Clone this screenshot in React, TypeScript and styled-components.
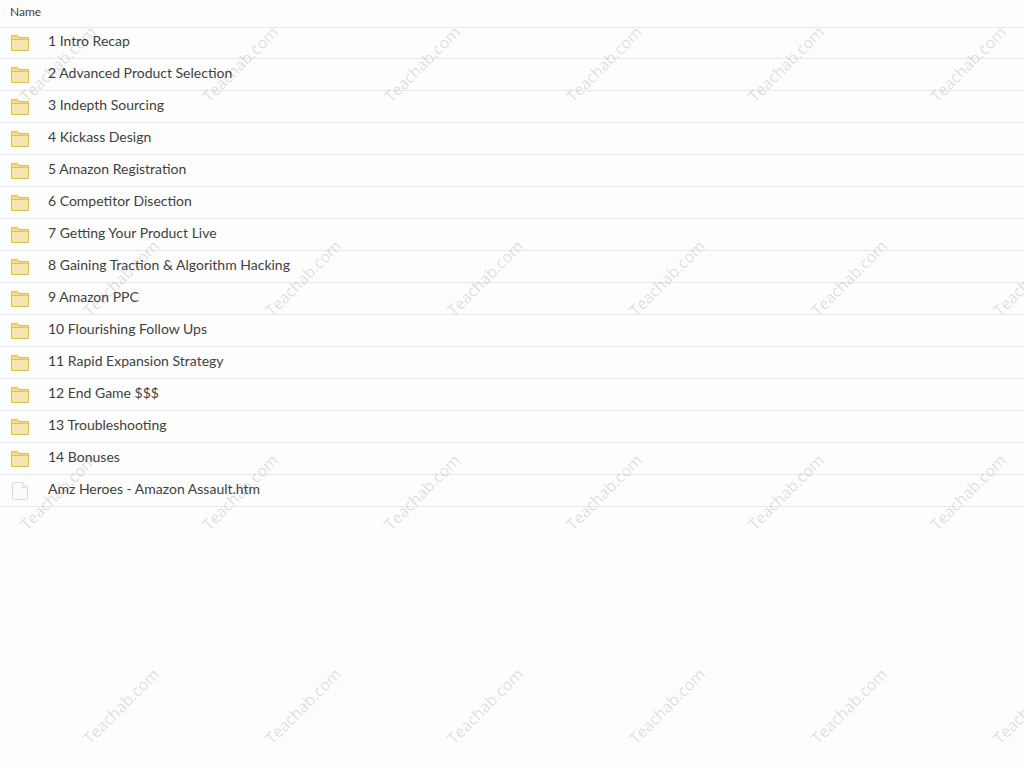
import React from "react";
import styled, { createGlobalStyle } from "styled-components";

const GlobalStyle = createGlobalStyle`
  *, *::before, *::after { box-sizing: border-box; }
  body {
    margin: 0;
    background: #fdfdfd;
    color: #3f3f3f;
    font-family: Lato, "Open Sans", sans-serif;
  }
`;

const Page = styled.main`
  position: relative;
  min-height: 100vh;
  overflow: hidden;
`;

const FileTable = styled.table`
  width: 100%;
  border-collapse: separate;
  border-spacing: 0;
`;

const HeaderCell = styled.th`
  height: 27px;
  padding: 4px 10px 7px;
  text-align: left;
  vertical-align: top;
  font-size: 12px;
  line-height: 16px;
  font-weight: 400;
`;

const FileRow = styled.tr`
  &:first-child td {
    border-top: 1px solid #e8e8e8;
    padding-top: 3px;
  }
`;

const Cell = styled.td`
  height: 32px;
  padding: 4px 0 0;
  border-bottom: 1px solid #e8e8e8;
  vertical-align: top;
`;

const Entry = styled.a`
  display: flex;
  align-items: flex-start;
  gap: 18px;
  padding-left: 10px;
  font-size: 14px;
  line-height: 20px;
  color: inherit;
  text-decoration: none;
`;

const Icon = styled.svg`
  flex: none;
  width: 20px;
  height: 20px;
  margin-top: 2px;
`;

const Watermarks = styled.div`
  position: absolute;
  inset: -43px 0 0 -33px;
  overflow: hidden;
  pointer-events: none;
`;

const MarkRow = styled.div<{ $shifted: boolean }>`
  display: flex;
  height: 214px;
  padding-left: ${(p) => (p.$shifted ? 63 : 0)}px;
`;

const Mark = styled.span`
  flex: none;
  display: flex;
  align-items: center;
  justify-content: center;
  width: 182px;
  font-family: "Open Sans", "Noto Sans", sans-serif;
  font-size: 16px;
  line-height: 24px;
  color: rgba(0, 0, 0, 0.14);
  transform: rotate(-45deg);
`;

const FolderIcon = () => (
  <Icon viewBox="0 0 20 20" aria-hidden="true">
    <path d="M1.5 17.5V2.5H7.5L9.5 4.5H18.5V17.5Z" fill="#f6e6ae" />
    <path d="M1.5 6.5V2.5H7.5L9.5 4.5H18.5V6.5Z" fill="#f5db7c" />
    <path d="M1.5 6.5H18.5" stroke="#e3c443" fill="none" />
    <path d="M1.5 17.5V2.5H7.5L9.5 4.5H18.5V17.5Z" fill="none" stroke="#dfc14a" strokeLinejoin="round" />
  </Icon>
);

const FileIcon = () => (
  <Icon viewBox="0 0 20 20" aria-hidden="true">
    <path
      d="M3.5 1.5H12.5L17.5 6.5V17.5Q17.5 18.5 16.5 18.5H3.5Q2.5 18.5 2.5 17.5V2.5Q2.5 1.5 3.5 1.5Z"
      fill="#fbfbfb"
      stroke="#dadada"
    />
    <path d="M12.5 1.5V6.5H17.5" fill="none" stroke="#dadada" />
  </Icon>
);

type Item = { name: string; kind: "folder" | "file" };

const folders = [
  "1 Intro Recap",
  "2 Advanced Product Selection",
  "3 Indepth Sourcing",
  "4 Kickass Design",
  "5 Amazon Registration",
  "6 Competitor Disection",
  "7 Getting Your Product Live",
  "8 Gaining Traction & Algorithm Hacking",
  "9 Amazon PPC",
  "10 Flourishing Follow Ups",
  "11 Rapid Expansion Strategy",
  "12 End Game $$$",
  "13 Troubleshooting",
  "14 Bonuses",
];

const items: Item[] = [
  ...folders.map((name): Item => ({ name, kind: "folder" })),
  { name: "Amz Heroes - Amazon Assault.htm", kind: "file" },
];

export default function App() {
  return (
    <Page>
      <GlobalStyle />
      <FileTable>
        <thead>
          <tr>
            <HeaderCell scope="col">Name</HeaderCell>
          </tr>
        </thead>
        <tbody>
          {items.map(({ name, kind }) => (
            <FileRow key={name}>
              <Cell>
                <Entry href="#">
                  {kind === "folder" ? <FolderIcon /> : <FileIcon />}
                  <span>{name}</span>
                </Entry>
              </Cell>
            </FileRow>
          ))}
        </tbody>
      </FileTable>
      <Watermarks aria-hidden="true">
        {[0, 1, 2, 3].map((row) => (
          <MarkRow key={row} $shifted={row % 2 === 1}>
            {[0, 1, 2, 3, 4, 5].map((col) => (
              <Mark key={col}>Teachab.com</Mark>
            ))}
          </MarkRow>
        ))}
      </Watermarks>
    </Page>
  );
}
